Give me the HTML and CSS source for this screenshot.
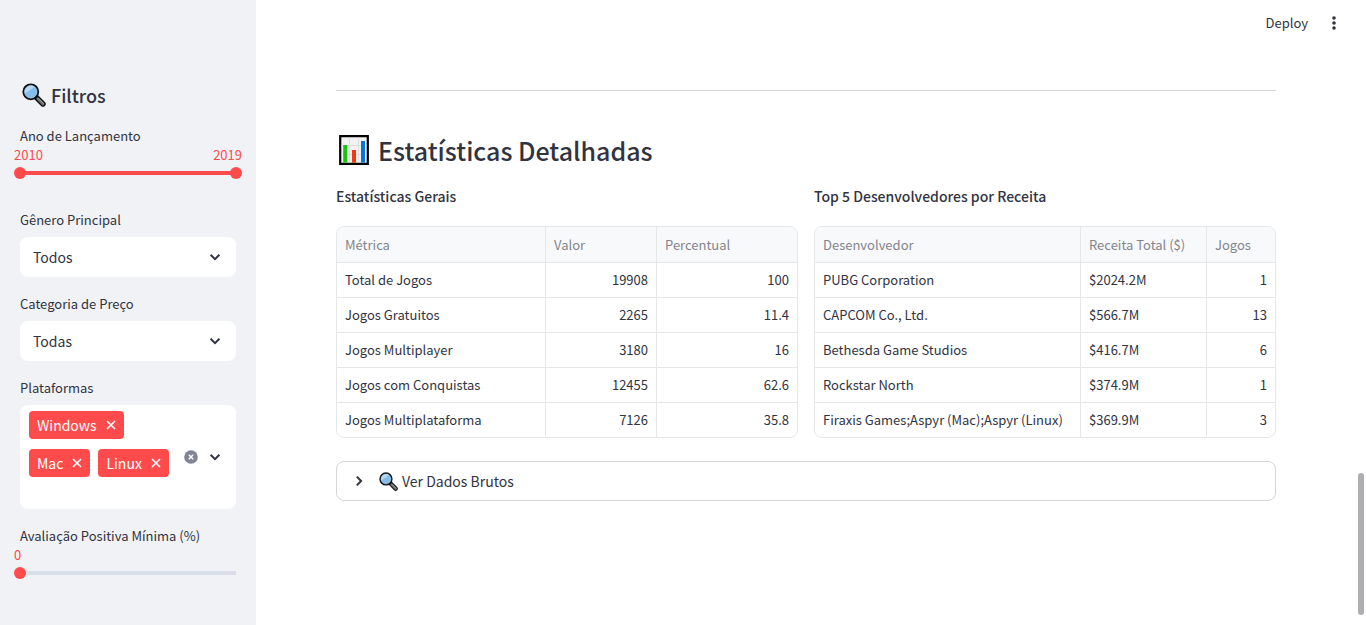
FILE: index.html
```html
<!DOCTYPE html>
<html lang="pt-BR">
<head>
<meta charset="utf-8">
<title>Estatísticas Detalhadas</title>
<meta name="viewport" content="width=device-width, initial-scale=1">
<link rel="stylesheet" href="styles.css">
</head>
<body>
<svg class="defs" aria-hidden="true">
  <symbol id="lens" viewBox="0 0 24 24">
    <path d="M14 14l7 7" stroke="#111" stroke-width="5.4" stroke-linecap="round"/>
    <path d="M15.8 15.8l5.2 5.2" stroke="#6b7172" stroke-width="2.8" stroke-linecap="round"/>
    <path d="M16.6 15.6l5 5" stroke="#9a9f9f" stroke-width="1" stroke-linecap="round"/>
    <circle cx="8.8" cy="8.8" r="7.4" fill="#83beec" stroke="#111" stroke-width="2"/>
    <path d="M3 10.6A6.2 6.2 0 0 1 12.6 3.8z" fill="#b5daf5"/>
    <circle cx="8.8" cy="8.8" r="6.2" fill="none" stroke="#a8c6da" stroke-width=".7"/>
  </symbol>
  <symbol id="chevron" viewBox="0 0 12 12">
    <path d="M1.6 3.8L6 8.1l4.4-4.3" fill="none" stroke="currentColor" stroke-width="2"/>
  </symbol>
  <symbol id="cross" viewBox="0 0 10 10">
    <path d="M1 1l8 8M9 1L1 9" fill="none" stroke="currentColor" stroke-width="1.6"/>
  </symbol>
</svg>
<div class="app">
  <aside class="sidebar">
    <h2 class="sidebar-title"><svg class="title-lens" aria-hidden="true"><use href="#lens"/></svg>Filtros</h2>
    <div class="field field-slider">
      <label class="label" for="year-from">Ano de Lançamento</label>
      <div class="values"><output>2010</output><output>2019</output></div>
      <div class="range range-double">
        <input class="slider" id="year-from" type="range" min="2010" max="2019" value="2010">
        <input class="slider" id="year-to" type="range" min="2010" max="2019" value="2019" aria-label="Ano de Lançamento, até">
      </div>
    </div>
    <div class="field">
      <label class="label" for="genre">Gênero Principal</label>
      <div class="select-box">
        <select class="select" id="genre"><option>Todos</option></select>
        <svg class="chevron" aria-hidden="true"><use href="#chevron"/></svg>
      </div>
    </div>
    <div class="field">
      <label class="label" for="price">Categoria de Preço</label>
      <div class="select-box">
        <select class="select" id="price"><option>Todas</option></select>
        <svg class="chevron" aria-hidden="true"><use href="#chevron"/></svg>
      </div>
    </div>
    <div class="field">
      <span class="label" id="platforms">Plataformas</span>
      <div class="multi" role="group" aria-labelledby="platforms">
        <div class="tags">
          <span class="tag">Windows<button class="tag-remove" aria-label="Remover Windows"><svg class="cross"><use href="#cross"/></svg></button></span>
          <span class="tag">Mac<button class="tag-remove" aria-label="Remover Mac"><svg class="cross"><use href="#cross"/></svg></button></span>
          <span class="tag">Linux<button class="tag-remove" aria-label="Remover Linux"><svg class="cross"><use href="#cross"/></svg></button></span>
        </div>
        <button class="icon-button" aria-label="Limpar tudo"><svg class="clear" viewBox="0 0 14 14"><circle cx="7" cy="7" r="6.8" fill="#808495"/><path d="M4.8 4.8l4.4 4.4M9.2 4.8L4.8 9.2" stroke="#fff" stroke-width="1.5"/></svg></button>
        <button class="icon-button" aria-label="Abrir"><svg class="chevron-inline"><use href="#chevron"/></svg></button>
      </div>
    </div>
    <div class="field field-slider">
      <label class="label" for="rating">Avaliação Positiva Mínima (%)</label>
      <div class="values"><output>0</output></div>
      <div class="range"><input class="slider" id="rating" type="range" min="0" max="100" value="0"></div>
    </div>
  </aside>
  <main class="main">
    <header class="toolbar">
      <button class="deploy">Deploy</button>
      <button class="icon-button" aria-label="Menu"><svg class="dots" viewBox="0 0 4 14"><g fill="currentColor"><circle cx="2" cy="2" r="1.8"/><circle cx="2" cy="7" r="1.8"/><circle cx="2" cy="12" r="1.8"/></g></svg></button>
    </header>
    <div class="content">
      <hr class="divider">
      <h1 class="heading"><svg class="chart" viewBox="0 0 30 30" aria-hidden="true"><path d="M1.2 1.2h27.6v27.6H1.2z" fill="#f2f2f2" stroke="#000" stroke-width="2.2"/><path d="M10.5 2.5v25M19.5 2.5v25M2.5 10.5h25M2.5 19.5h25" stroke="#dedede"/><path d="M4.2 10h4v17.7h-4z" fill="#16c60c"/><path d="M13 15h4v12.7h-4z" fill="#f03a17"/><path d="M22 6h4v21.7h-4z" fill="#0078d7"/></svg>Estatísticas Detalhadas</h1>
      <div class="columns">
        <section class="column">
          <h2 class="subheading" id="general">Estatísticas Gerais</h2>
          <div class="table-frame">
            <table class="table table-general" aria-labelledby="general">
              <colgroup><col class="c-metric"><col class="c-value"><col></colgroup>
              <thead><tr><th>Métrica</th><th>Valor</th><th>Percentual</th></tr></thead>
              <tbody>
                <tr><td>Total de Jogos</td><td class="num">19908</td><td class="num">100</td></tr>
                <tr><td>Jogos Gratuitos</td><td class="num">2265</td><td class="num">11.4</td></tr>
                <tr><td>Jogos Multiplayer</td><td class="num">3180</td><td class="num">16</td></tr>
                <tr><td>Jogos com Conquistas</td><td class="num">12455</td><td class="num">62.6</td></tr>
                <tr><td>Jogos Multiplataforma</td><td class="num">7126</td><td class="num">35.8</td></tr>
              </tbody>
            </table>
          </div>
        </section>
        <section class="column">
          <h2 class="subheading" id="top">Top 5 Desenvolvedores por Receita</h2>
          <div class="table-frame">
            <table class="table" aria-labelledby="top">
              <colgroup><col><col class="c-revenue"><col class="c-games"></colgroup>
              <thead><tr><th>Desenvolvedor</th><th>Receita Total ($)</th><th>Jogos</th></tr></thead>
              <tbody>
                <tr><td>PUBG Corporation</td><td>$2024.2M</td><td class="num">1</td></tr>
                <tr><td>CAPCOM Co., Ltd.</td><td>$566.7M</td><td class="num">13</td></tr>
                <tr><td>Bethesda Game Studios</td><td>$416.7M</td><td class="num">6</td></tr>
                <tr><td>Rockstar North</td><td>$374.9M</td><td class="num">1</td></tr>
                <tr><td>Firaxis Games;Aspyr (Mac);Aspyr (Linux)</td><td>$369.9M</td><td class="num">3</td></tr>
              </tbody>
            </table>
          </div>
        </section>
      </div>
      <details class="expander">
        <summary class="summary"><svg class="chevron-right" aria-hidden="true"><use href="#chevron"/></svg><svg class="summary-lens" aria-hidden="true"><use href="#lens"/></svg>Ver Dados Brutos</summary>
      </details>
    </div>
  </main>
</div>
<div class="scroll-thumb"></div>
</body>
</html>
```
FILE: styles.css
```css
* { box-sizing: border-box; }

body {
  margin: 0;
  background: #fff;
  color: #31333f;
  font: 400 13px/20px "Noto Sans CJK JP", "Noto Sans", sans-serif;
}

button, select {
  padding: 0;
  border: 0;
  background: none;
  color: inherit;
  font: inherit;
}

svg { display: block; flex: none; }
.defs { position: absolute; width: 0; height: 0; }

.app { display: flex; min-height: 100vh; }

/* Sidebar */
.sidebar {
  display: flex;
  flex-direction: column;
  gap: 17px;
  flex: none;
  width: 256px;
  padding: 81px 20px 20px;
  background: #f0f2f6;
}
.sidebar-title {
  display: flex;
  align-items: center;
  gap: 5px;
  margin: 0;
  padding-left: 2px;
  font-size: 18px;
  line-height: 28px;
  font-weight: 500;
}
.title-lens { width: 24px; height: 24px; }
.field { display: flex; flex-direction: column; gap: 7px; }
.field-slider { gap: 0; padding-bottom: 12px; }

.values {
  display: flex;
  justify-content: space-between;
  margin: 0 -6px;
  padding-bottom: 2px;
  color: #ff4b4b;
  line-height: 17px;
}
.range { display: grid; margin: 0 -6px; }
.slider {
  grid-area: 1 / 1;
  appearance: none;
  width: 100%;
  height: 16px;
  margin: 0;
  background: linear-gradient(#d9deea, #d9deea) center / calc(100% - 12px) 4px no-repeat;
}
.range-double .slider {
  background-image: linear-gradient(#ff4b4b, #ff4b4b);
  pointer-events: none;
}
.range-double .slider + .slider { background: none; }
.slider::-webkit-slider-thumb {
  appearance: none;
  width: 12px;
  height: 12px;
  border-radius: 50%;
  background: #ff4b4b;
  pointer-events: auto;
}

.select-box { display: grid; align-items: center; }
.select {
  grid-area: 1 / 1;
  appearance: none;
  height: 40px;
  padding: 0 36px 0 13px;
  border-radius: 8px;
  background: #fff;
  font-size: 14px;
}
.chevron {
  grid-area: 1 / 1;
  justify-self: end;
  width: 12px;
  height: 12px;
  margin-right: 15px;
  pointer-events: none;
}

.multi {
  display: flex;
  align-items: center;
  gap: 11px;
  min-height: 104px;
  padding: 6px 15px 6px 9px;
  border-radius: 8px;
  background: #fff;
}
.tags {
  display: flex;
  flex: 1;
  flex-wrap: wrap;
  align-self: flex-start;
  gap: 10px 8px;
}
.tag {
  display: flex;
  align-items: center;
  gap: 9px;
  height: 28px;
  padding: 0 8px;
  border-radius: 4px;
  background: #ff4b4b;
  color: #fff;
  font-size: 14px;
}
.cross { width: 10px; height: 10px; }
.clear { width: 14px; height: 14px; }
.chevron-inline { width: 12px; height: 12px; }

/* Main area */
.main { flex: 1; min-width: 0; }
.toolbar {
  display: flex;
  align-items: center;
  justify-content: flex-end;
  gap: 24px;
  height: 46px;
  padding-right: 30px;
}
.dots { width: 4px; height: 14px; }
.content { padding: 44px 90px 64px 80px; }
.divider {
  height: 1px;
  margin: 0 0 42px;
  border: 0;
  background: #d6d6d9;
}
.heading {
  display: flex;
  align-items: center;
  gap: 9px;
  margin: 0 0 19px;
  padding-left: 3px;
  font-size: 25px;
  line-height: 34px;
  font-weight: 500;
}
.chart { width: 30px; height: 30px; }
.columns { display: flex; gap: 16px; margin-bottom: 23px; }
.column { flex: 1; min-width: 0; }
.subheading {
  margin: 0 0 20px;
  font-size: 14px;
  line-height: 20px;
  font-weight: 500;
}

.table-frame {
  overflow: hidden;
  border: 1px solid #e6e7e9;
  border-radius: 8px;
}
.table {
  width: 100%;
  table-layout: fixed;
  border-collapse: separate;
  border-spacing: 0;
}
.c-metric { width: 209px; }
.c-value { width: 111px; }
.c-revenue { width: 126px; }
.c-games { width: 68px; }
.table th, .table td {
  height: 35px;
  padding: 0 8px;
  border: 0 solid #e6e7e9;
  border-width: 0 1px 1px 0;
  text-align: left;
  white-space: nowrap;
}
.table th {
  height: 36px;
  background: #f8f9fb;
  color: #83858c;
  font-weight: 400;
}
.table .num { text-align: right; }
.table th:last-child, .table td:last-child { border-right-width: 0; }
.table tr:last-child td { height: 34px; border-bottom-width: 0; }

.expander { border: 1px solid #d6d6d9; border-radius: 8px; }
.summary {
  display: flex;
  align-items: center;
  height: 38px;
  padding: 0 16px;
  list-style: none;
  font-size: 14px;
}
.chevron-right { width: 12px; height: 12px; margin-right: 14px; rotate: -90deg; }
.summary-lens { width: 19px; height: 19px; margin-right: 4px; }

/* Overlay scroll indicator */
.scroll-thumb {
  position: fixed;
  right: 2px;
  bottom: 10px;
  width: 6px;
  height: 142px;
  border-radius: 3px;
  background: #adadb2;
}
```
